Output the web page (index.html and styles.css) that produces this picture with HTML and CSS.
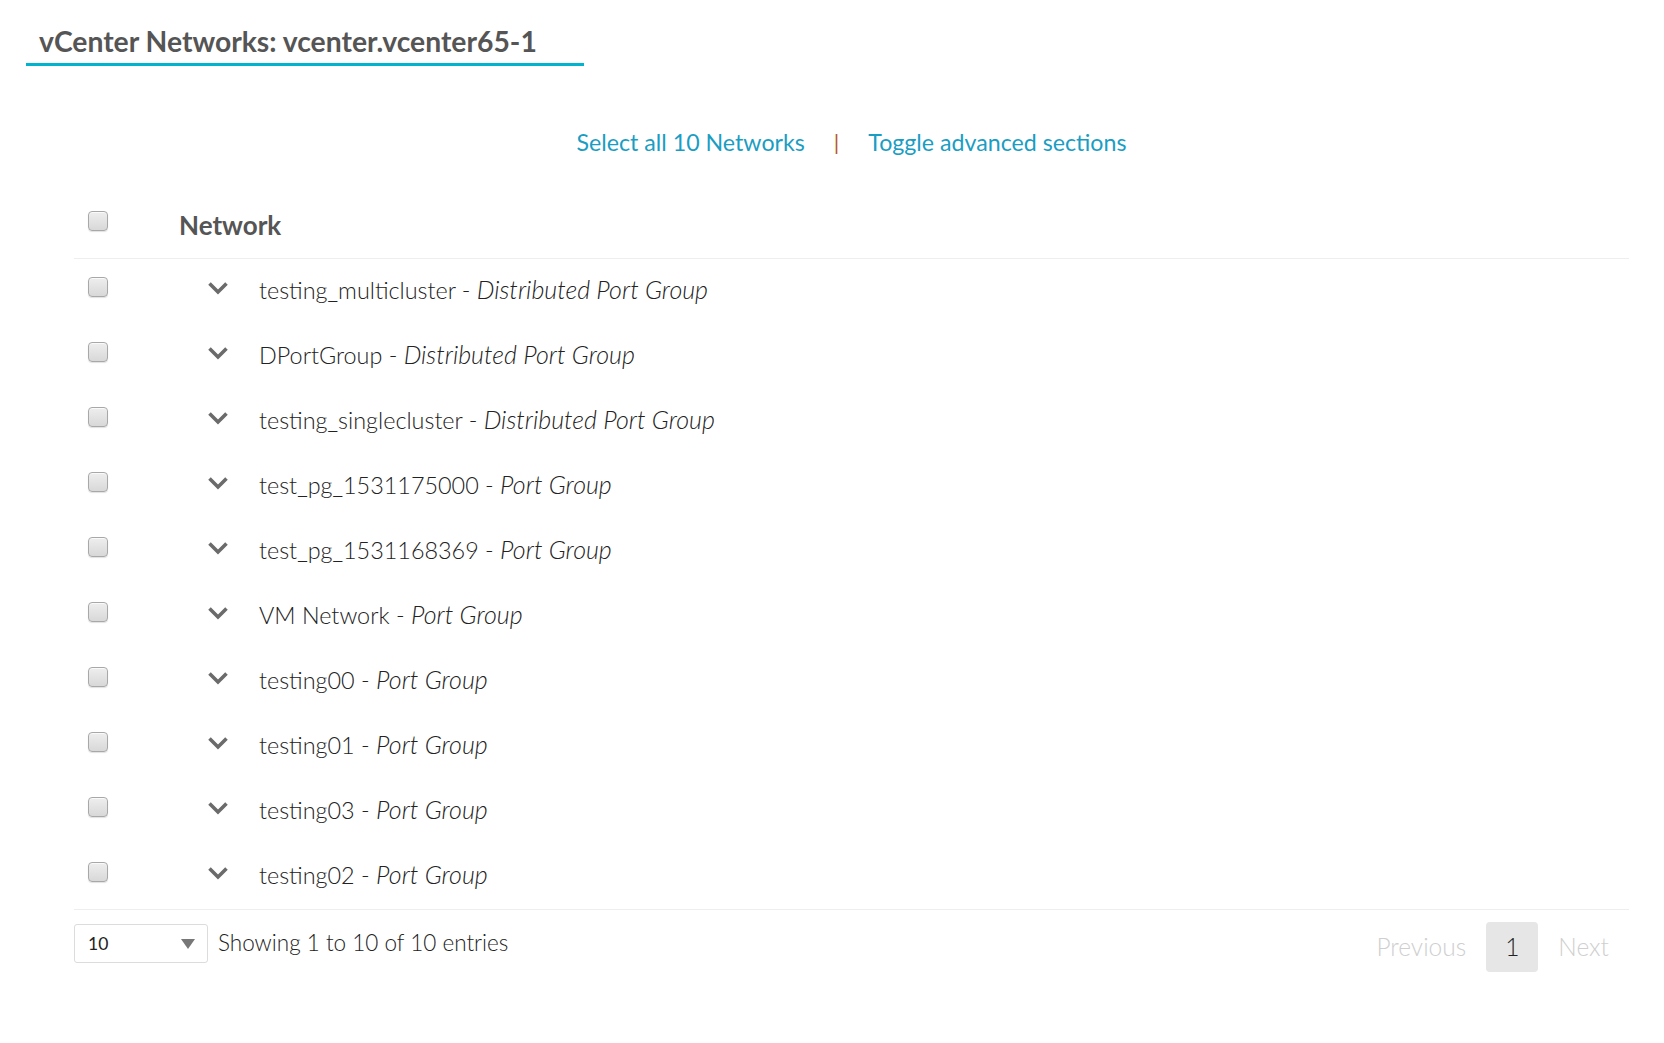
FILE: index.html
```html
<!DOCTYPE html>
<html lang="en">
<head>
<meta charset="utf-8">
<title>vCenter Networks</title>
<link rel="stylesheet" href="styles.css">
</head>
<body>
<div class="page">
  <h1 class="title">vCenter Networks: vcenter.vcenter65-1</h1>
  <div class="content">
    <div class="actions">
      <a class="action-link" href="#">Select all 10 Networks</a>
      <span class="sep">|</span>
      <a class="action-link" href="#">Toggle advanced sections</a>
    </div>
    <div class="table">
      <div class="thead">
        <div class="cell-check"><span class="checkbox"></span></div>
        <div class="th-name">Network</div>
      </div>
      <div class="row"><div class="cell-check"><span class="checkbox"></span></div><div class="cell-name"><svg class="chev" viewBox="0 0 22 14"><path d="M2.5 2.5 L11 11 L19.5 2.5"/></svg><span class="name">testing_multicluster - <em>Distributed Port Group</em></span></div></div>
      <div class="row"><div class="cell-check"><span class="checkbox"></span></div><div class="cell-name"><svg class="chev" viewBox="0 0 22 14"><path d="M2.5 2.5 L11 11 L19.5 2.5"/></svg><span class="name">DPortGroup - <em>Distributed Port Group</em></span></div></div>
      <div class="row"><div class="cell-check"><span class="checkbox"></span></div><div class="cell-name"><svg class="chev" viewBox="0 0 22 14"><path d="M2.5 2.5 L11 11 L19.5 2.5"/></svg><span class="name">testing_singlecluster - <em>Distributed Port Group</em></span></div></div>
      <div class="row"><div class="cell-check"><span class="checkbox"></span></div><div class="cell-name"><svg class="chev" viewBox="0 0 22 14"><path d="M2.5 2.5 L11 11 L19.5 2.5"/></svg><span class="name">test_pg_1531175000 - <em>Port Group</em></span></div></div>
      <div class="row"><div class="cell-check"><span class="checkbox"></span></div><div class="cell-name"><svg class="chev" viewBox="0 0 22 14"><path d="M2.5 2.5 L11 11 L19.5 2.5"/></svg><span class="name">test_pg_1531168369 - <em>Port Group</em></span></div></div>
      <div class="row"><div class="cell-check"><span class="checkbox"></span></div><div class="cell-name"><svg class="chev" viewBox="0 0 22 14"><path d="M2.5 2.5 L11 11 L19.5 2.5"/></svg><span class="name">VM Network - <em>Port Group</em></span></div></div>
      <div class="row"><div class="cell-check"><span class="checkbox"></span></div><div class="cell-name"><svg class="chev" viewBox="0 0 22 14"><path d="M2.5 2.5 L11 11 L19.5 2.5"/></svg><span class="name">testing00 - <em>Port Group</em></span></div></div>
      <div class="row"><div class="cell-check"><span class="checkbox"></span></div><div class="cell-name"><svg class="chev" viewBox="0 0 22 14"><path d="M2.5 2.5 L11 11 L19.5 2.5"/></svg><span class="name">testing01 - <em>Port Group</em></span></div></div>
      <div class="row"><div class="cell-check"><span class="checkbox"></span></div><div class="cell-name"><svg class="chev" viewBox="0 0 22 14"><path d="M2.5 2.5 L11 11 L19.5 2.5"/></svg><span class="name">testing03 - <em>Port Group</em></span></div></div>
      <div class="row"><div class="cell-check"><span class="checkbox"></span></div><div class="cell-name"><svg class="chev" viewBox="0 0 22 14"><path d="M2.5 2.5 L11 11 L19.5 2.5"/></svg><span class="name">testing02 - <em>Port Group</em></span></div></div>
    </div>
    <div class="footer">
      <div class="footer-left">
        <div class="select"><span class="select-val">10</span><span class="select-arrow"></span></div>
        <span class="info">Showing 1 to 10 of 10 entries</span>
      </div>
      <div class="pager">
        <span class="pg disabled">Previous</span>
        <span class="pg current">1</span>
        <span class="pg disabled">Next</span>
      </div>
    </div>
  </div>
</div>
</body>
</html>
```

FILE: styles.css
```css
* { box-sizing: border-box; }
html, body { margin: 0; padding: 0; }
body {
  background: #ffffff;
  font-family: Lato, "Open Sans", "Liberation Sans", sans-serif;
  color: #333;
}
.page { width: 1664px; }
.title {
  margin: 0 0 0 26px;
  width: 558px;
  padding: 26px 13px 7px;
  font-size: 28.3px;
  line-height: 30px;
  font-weight: 700;
  color: #555;
  border-bottom: 3px solid #00b4d0;
}
.content {
  margin-left: 74px;
  width: 1555px;
}
.actions {
  margin-top: 61px;
  display: flex;
  justify-content: center;
  align-items: center;
  gap: 29px;
  font-size: 23.2px;
  line-height: 30px;
}
.action-link { color: #1a9dc3; text-decoration: none; }
.sep { color: #b8592a; font-size: 22px; }
.table { margin-top: 44px; }
.thead {
  display: flex;
  align-items: center;
  height: 58px;
  padding-bottom: 10px;
  border-bottom: 1px solid #eeeeee;
}
.cell-check {
  width: 105px;
  padding-left: 14px;
  display: flex;
  align-items: center;
}
.thead .cell-check { margin-top: -8px; }
.th-name {
  font-size: 26px;
  font-weight: 700;
  color: #555;
}
.checkbox {
  display: block;
  width: 20px;
  height: 20px;
  border: 1px solid #a8a8a8;
  border-radius: 4px;
  background: linear-gradient(#eeeeee, #d8d8d8);
  box-shadow: inset 0 1px 0 #fafafa, 0 1px 1px rgba(0,0,0,0.12);
}
.row {
  display: flex;
  align-items: center;
  height: 65px;
}
.row .cell-check { margin-top: -9px; }
.cell-name {
  display: flex;
  align-items: center;
  padding-left: 28px;
  margin-top: -5px;
}
.chev {
  width: 22px;
  height: 14px;
  margin-right: 30px;
  margin-top: -2px;
}
.chev path {
  fill: none;
  stroke: #6b6b6b;
  stroke-width: 3.6;
  stroke-linecap: butt;
  stroke-linejoin: miter;
}
.name {
  font-size: 23.4px;
  font-weight: 300;
  color: #222;
  line-height: 30px;
}
.name em { font-style: italic; font-size: 25px; }
.footer {
  border-top: 1px solid #eeeeee;
  display: flex;
  justify-content: space-between;
  align-items: flex-start;
  padding-top: 12px;
}
.footer-left {
  display: flex;
  align-items: center;
  gap: 10px;
  padding-top: 2px;
}
.select {
  width: 134px;
  height: 39px;
  border: 1px solid #dcdcdc;
  border-radius: 3px;
  background: #fff;
  display: flex;
  align-items: center;
  justify-content: space-between;
  padding: 0 12px 0 13px;
}
.select-val { font-size: 17.5px; color: #222; }
.select-arrow {
  width: 0;
  height: 0;
  border-left: 7px solid transparent;
  border-right: 7px solid transparent;
  border-top: 10px solid #777;
}
.info { font-size: 22.5px; font-weight: 300; color: #222; margin-top: -3px; }
.pager { display: flex; align-items: center; }
.pg {
  display: block;
  padding: 0 20px;
  height: 50px;
  line-height: 50px;
  font-size: 24.5px;
  font-weight: 300;
}
.pg.disabled { color: #cfcfcf; }
.pg.current {
  background: #e6e6e6;
  border-radius: 4px;
  color: #222;
  padding: 0 19px;
}
```
